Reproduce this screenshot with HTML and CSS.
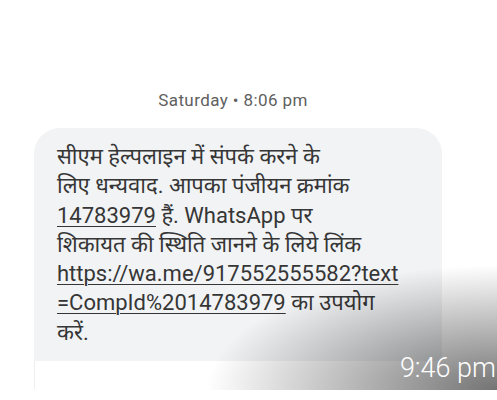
FILE: index.html
```html
<!DOCTYPE html>
<html>
<head>
  <title>Message</title>
  <meta name="viewport" content="width=device-width, initial-scale=1.0">
  <link rel="stylesheet" href="styles.css">
</head>
<body>
  <div class="thread">
    <div class="stamp">Saturday &bull; 8:06 pm</div>
    <div class="bubble">
      <p class="message">
        सीएम हेल्पलाइन में संपर्क करने के<br>
        लिए धन्यवाद. आपका पंजीयन क्रमांक<br>
        <a class="link" href="#">14783979</a> हैं. WhatsApp पर<br>
        शिकायत की स्थिति जानने के लिये लिंक<br>
        <a class="link" href="#">https://wa.me/917552555582?text<br>=CompId%2014783979</a> का उपयोग<br>
        करें.
      </p>
    </div>
    <div class="bubble-rest"></div>
  </div>
  <!-- shade from the screenshot overlay in the corner -->
  <div class="corner-shade">
    <span class="clock">9:46 pm</span>
  </div>
</body>
</html>
```

FILE: styles.css
```css
body {
  background-color: #fff;
  margin: 0;
  overflow: hidden;
  font-family: Roboto, "Noto Sans", sans-serif;
}

.thread {
  padding-top: 88px;
  padding-left: 34px;
  width: 408px;
}

.stamp {
  text-align: center;
  color: #606060;
  font-size: 17px;
  letter-spacing: 0.4px;
  line-height: 24px;
  margin-bottom: 16px;
  padding-right: 10px;
}

.bubble {
  background-color: #f1f3f4;
  border-radius: 26px 26px 0 0;
  padding: 14px 10px 14px 23px;
}

.message {
  margin: 0;
  color: #363636;
  font-size: 22px;
  line-height: 29.3px;
}

.link {
  color: #363636;
  text-decoration: underline;
  text-decoration-thickness: 1px;
  text-underline-offset: 3px;
}

.bubble-rest {
  height: 28px;
  border-left: 1px solid #eceef0;
}

.corner-shade {
  position: absolute;
  left: 0;
  right: 0;
  top: 255px;
  height: 135px;
  display: flex;
  justify-content: flex-end;
  align-items: flex-end;
  background: radial-gradient(ellipse 290px 125px at 100% 100%, rgba(0, 0, 0, 0.55), rgba(0, 0, 0, 0.28) 50%, rgba(0, 0, 0, 0) 100%);
}

.clock {
  color: #fff;
  font-size: 27px;
  font-weight: 300;
  line-height: 34px;
  margin-right: 1px;
  margin-bottom: 5px;
  white-space: nowrap;
}
```
